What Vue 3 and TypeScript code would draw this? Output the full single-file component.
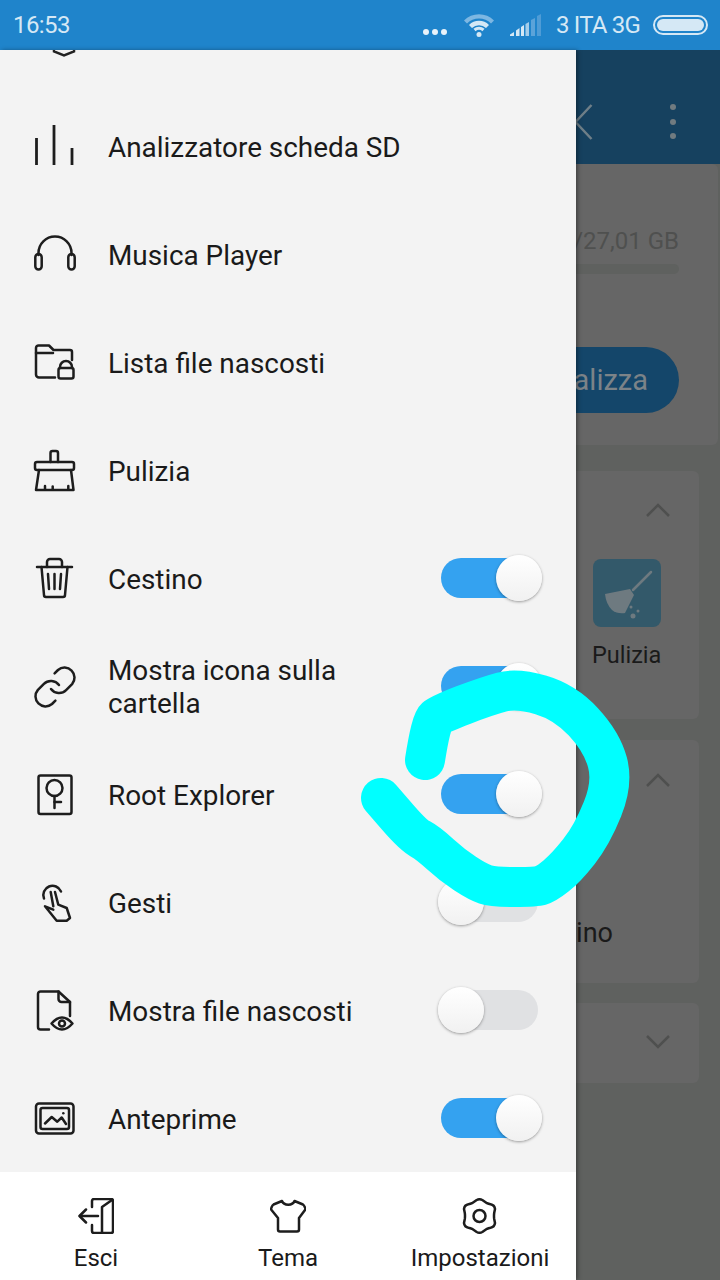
<script setup lang="ts">
interface Row {
  label: string
  icon: string[]
  toggle?: 'on' | 'off'
  thin?: boolean
}

const rows: Row[] = [
  { label: 'Analizzatore scheda SD', thin: true, icon: ['M5.5 15V42', 'M23 2V42', 'M41 25V42'] },
  {
    label: 'Musica Player',
    icon: [
      'M7.5 24V22a16.5 16.5 0 0 1 33 0V24',
      'M7.5 23a3.2 3.2 0 0 1 3.2 3.200V35.300a3.200 3.200 0 0 1-6.400 0V26.200a3.200 3.200 0 0 1 3.200-3.200Z',
      'M40.5 23a3.200 3.200 0 0 1 3.200 3.200V35.300a3.200 3.200 0 0 1-6.400 0V26.200a3.200 3.200 0 0 1 3.200-3.200Z'
    ]
  },
  {
    label: 'Lista file nascosti',
    icon: [
      'M24 38.5H8a3 3 0 0 1-3-3V9a2.5 2.5 0 0 1 2.5-2.5H18l4.5 4.5H39a2 2 0 0 1 2 2V21',
      'M5 14H22',
      'M29.5 29H40.5a2 2 0 0 1 2 2V37.5a2 2 0 0 1-2 2H29.5a2 2 0 0 1-2-2V31a2 2 0 0 1 2-2Z',
      'M29 29V28a6 6 0 0 1 12 0V29'
    ]
  },
  {
    label: 'Pulizia',
    icon: [
      'M19.5 15V6a2 2 0 0 1 2-2H25a2 2 0 0 1 2 2V15',
      'M6 15H41a2 2 0 0 1 2 2V21a2 2 0 0 1-2 2H6a2 2 0 0 1-2-2V17a2 2 0 0 1 2-2Z',
      'M8 23L5 43H42.5L40 23',
      'M14 42V39',
      'M21.700 42V39.500',
      'M37.300 42V39'
    ]
  },
  {
    label: 'Cestino',
    toggle: 'on',
    icon: [
      'M6 12H41',
      'M16 12V7a3 3 0 0 1 3-3H28a3 3 0 0 1 3 3V12',
      'M10.5 12L13 40a2 2 0 0 0 2 2H32a2 2 0 0 0 2-2L36.5 12',
      'M17 19L18 34',
      'M23.5 19V34',
      'M30 19L29 34'
    ]
  },
  {
    label: 'Mostra icona sulla cartella',
    toggle: 'on',
    icon: [
      'M20 26a10 10 0 0 0 15.1 1.1l6-6a10 10 0 0 0-14.1-14.1l-3.4 3.4',
      'M28 22a10 10 0 0 0-15.1-1.1l-6 6a10 10 0 0 0 14.1 14.1l3.4-3.4'
    ]
  },
  {
    label: 'Root Explorer',
    toggle: 'on',
    icon: [
      'M9.5 4.5H38.5a2 2 0 0 1 2 2V41a2 2 0 0 1-2 2H9.5a2 2 0 0 1-2-2V6.5a2 2 0 0 1 2-2Z',
      'M23.5 9a8 8 0 1 1 0 16a8 8 0 1 1 0-16Z',
      'M23.5 25V37',
      'M23.5 31H30'
    ]
  },
  {
    label: 'Gesti',
    toggle: 'off',
    icon: [
      'M13 19.500a9 9 0 1 1 17-7',
      'M19.700 13L22.300 27.300',
      'M24 13L27.300 25.700L35.700 29L39 39L35.700 41.700H25.700L14 27.300L22.300 30.700'
    ]
  },
  {
    label: 'Mostra file nascosti',
    toggle: 'off',
    icon: [
      'M18 42.500H9.500a2.500 2.500 0 0 1-2.500-2.500V7a2.500 2.500 0 0 1 2.500-2.500H27.500L39 15V29',
      'M27.500 4.500V12a3 3 0 0 0 3 3H39',
      'M20.500 36.500Q31 24.500 41.500 36.500Q31 48.500 20.500 36.500Z',
      'M31 33.500a3 3 0 1 1 0 6a3 3 0 1 1 0-6Z'
    ]
  },
  {
    label: 'Anteprime',
    toggle: 'on',
    icon: [
      'M8 8.500H39.500a3 3 0 0 1 3 3V35.500a3 3 0 0 1-3 3H8a3 3 0 0 1-3-3V11.500a3 3 0 0 1 3-3Z',
      'M11.500 13H36a2 2 0 0 1 2 2V32a2 2 0 0 1-2 2H11.500a2 2 0 0 1-2-2V15a2 2 0 0 1 2-2Z',
      'M14 28.500L20.700 22L26.300 26.700L30.700 22.500L35 29',
      'M32.300 18.300h.01'
    ]
  }
]

const navs = [
  {
    label: 'Esci',
    icon: [
      'M14 9V3a2 2 0 0 1 2-2H33a2 2 0 0 1 2 2V33a2 2 0 0 1-2 2H16a2 2 0 0 1-2-2V27',
      'M24 35V9L34 2',
      'M20 18H2',
      'M8 11.500L1.500 18L8 24.500'
    ]
  },
  {
    label: 'Tema',
    icon: [
      'M12 3a6.500 5 0 0 0 12.500 0L33 6.500Q34 7 35 9.500Q35.800 11 35 12L29 20V31.500a2 2 0 0 1-2 2H10a2 2 0 0 1-2-2V20L1.500 12Q.7 11 1.500 9.500Q2.500 7 3.500 6.500Z'
    ]
  },
  {
    label: 'Impostazioni',
    icon: [
      'M14.700 2Q17.500 .5 20.300 2L25 5.200Q26.500 6 28.500 6.300Q32.500 7 33 11L32.200 15Q31.800 18 32.200 21L33 25Q32.500 29 28.500 29.700Q26.500 30 25 30.800L20.300 34Q17.500 35.500 14.700 34L10 30.800Q8.500 30 6.500 29.700Q2.500 29 2 25L2.800 21Q3.200 18 2.800 15L2 11Q2.500 7 6.500 6.300Q8.500 6 10 5.200Z',
      'M17.500 12a6 6 0 1 1 0 12a6 6 0 1 1 0-12Z'
    ]
  }
]

// The hand-drawn ring: a smooth curve through the sampled stroke points.
const ring: [number, number][] = [
  [425, 760], [431, 722], [440, 714], [487, 696], [517, 688], [565, 702], [602, 742],
  [613, 783], [592, 835], [566, 868], [546, 884], [535, 887], [493, 887], [478, 882],
  [452, 865], [428, 843], [413, 835], [381, 798]
]

const ringPath = ring.reduce((d, [x, y], i) => {
  if (i === 0) return `M${x} ${y}`
  if (i === ring.length - 1) return `${d}L${x} ${y}`
  const [nx, ny] = ring[i + 1]
  return `${d}Q${x} ${y} ${(x + nx) / 2} ${(y + ny) / 2}`
}, '')
</script>

<template>
  <div class="screen">
    <header class="status">
      <span class="clock">16:53</span>
      <div class="status-right">
        <span class="dots"><i></i><i></i><i></i></span>
        <svg class="wifi" width="32" height="26" viewBox="0 0 32 26">
          <path d="M1 9.500a21 21 0 0 1 30 0L28 12.500a17 17 0 0 0-24 0Z" fill="#7db7e2" />
          <path d="M6 14a14 14 0 0 1 20 0L23 17a10 10 0 0 0-14 0Z" fill="#d5e8f5" />
          <path d="M11.500 19a7 7 0 0 1 9 0" fill="none" stroke="#d5e8f5" stroke-width="3.200" />
          <circle cx="16" cy="23.500" r="2.500" fill="#d5e8f5" />
        </svg>
        <svg class="signal" width="32" height="22" viewBox="0 0 32 22">
          <path d="M0 22V20.500L4 18V22Z" fill="#d5e8f5" />
          <path d="M6 22V16.500L9.500 14V22Z" fill="#d5e8f5" />
          <path d="M11 22V13L14 11V22Z" fill="#d5e8f5" />
          <path d="M15.500 22V10L19 8V22Z" fill="#a5cdea" />
          <path d="M21 22V6L25 4V22Z" fill="#5ba3d9" />
          <path d="M27 22V2L31 0V22Z" fill="#4f9cd6" />
        </svg>
        <span class="carrier">3 ITA 3G</span>
        <span class="battery"><i></i></span>
      </div>
    </header>

    <div class="stage">
      <aside class="drawer">
        <div class="list">
          <div class="cut-row">
            <svg width="48" height="7" viewBox="0 0 48 7">
              <path class="stroke" d="M14 0V1.500L24 5.500L34 1.500V0" />
            </svg>
          </div>
          <div v-for="row in rows" :key="row.label" class="row">
            <svg class="icon" :class="{ thin: row.thin }" width="48" height="48" viewBox="0 0 48 48">
              <path v-for="d in row.icon" :key="d" :d="d" />
            </svg>
            <span class="label">{{ row.label }}</span>
            <span v-if="row.toggle" class="toggle" :class="row.toggle"><i></i></span>
          </div>
        </div>
        <nav class="nav">
          <div v-for="nav in navs" :key="nav.label" class="nav-item">
            <svg class="icon nav-icon" width="36" height="36" viewBox="0 0 36 36">
              <path v-for="d in nav.icon" :key="d" :d="d" />
            </svg>
            <span>{{ nav.label }}</span>
          </div>
        </nav>
      </aside>

      <main class="page">
        <div class="topbar">
          <svg width="20" height="36" viewBox="0 0 20 36">
            <path d="M17.500 1L1.500 18L17.500 35" fill="none" stroke="#6f7f88" stroke-width="2.500" />
          </svg>
          <span class="more"><i></i><i></i><i></i></span>
        </div>

        <section class="card storage">
          <div class="size">/27,01 GB</div>
          <div class="bar"></div>
          <div class="action">Analizza</div>
        </section>

        <section class="card tools">
          <svg class="chev" width="26" height="16" viewBox="0 0 26 16">
            <path d="M2 14L13 3L24 14" />
          </svg>
          <div class="tile">
            <svg width="68" height="68" viewBox="0 0 68 68">
              <path d="M58 13L40 31" fill="none" stroke="#6e7a80" stroke-width="2.500" stroke-linecap="round" />
              <path d="M12 35L37 30L41 36L32 54Q24 55 19 51Q13 45 12 35Z" fill="#6e7a80" />
              <circle cx="40" cy="57" r="2.500" fill="#6e7a80" />
              <circle cx="38" cy="48" r="1.500" fill="#6e7a80" />
              <circle cx="45" cy="52" r="1.500" fill="#6e7a80" />
            </svg>
          </div>
          <div class="tile-label">Pulizia</div>
        </section>

        <section class="card media">
          <svg class="chev" width="26" height="16" viewBox="0 0 26 16">
            <path d="M2 14L13 3L24 14" />
          </svg>
          <div class="media-label">Cestino</div>
        </section>

        <section class="card closed">
          <svg class="chev" width="26" height="16" viewBox="0 0 26 16">
            <path d="M2 2L13 13L24 2" />
          </svg>
        </section>
      </main>
    </div>

    <svg class="scribble" width="720" height="1280" viewBox="0 0 720 1280">
      <path :d="ringPath" />
    </svg>
  </div>
</template>

<style>
html,
body {
  margin: 0;
  background: #5f615f;
}
</style>

<style scoped>
.screen {
  width: 720px;
  height: 1280px;
  overflow: hidden;
  position: relative;
  display: flex;
  flex-direction: column;
  font-family: Roboto, "Liberation Sans", sans-serif;
}

.status {
  height: 50px;
  flex: none;
  background: #1f84cb;
  color: #d5e8f5;
  display: flex;
  align-items: center;
  justify-content: space-between;
  padding: 0 12px 0 13px;
  font-size: 24px;
  font-weight: 400;
}

.clock {
  letter-spacing: -0.6px;
}

.status-right {
  display: flex;
  align-items: center;
}

.dots {
  display: flex;
  gap: 3px;
  margin-top: 14px;
  margin-right: 16px;
}

.dots i {
  width: 6px;
  height: 6px;
  border-radius: 50%;
  background: #e8f2fa;
}

.wifi {
  margin-right: 15px;
  margin-top: -2px;
}

.signal {
  margin-right: 14px;
}

.carrier {
  margin-right: 13px;
  letter-spacing: -0.8px;
}

.battery {
  width: 55px;
  height: 20px;
  box-sizing: border-box;
  border: 2px solid #d5e8f5;
  border-radius: 10px;
  padding: 2px;
  display: flex;
}

.battery i {
  flex: 1;
  border-radius: 6px;
  background: #d5e8f5;
}

.stage {
  flex: 1;
  min-height: 0;
  display: flex;
}

.drawer {
  width: 576px;
  flex: none;
  display: flex;
  flex-direction: column;
  background: #f3f3f3;
  box-shadow: 2px 0 4px rgba(0, 0, 0, 0.35);
  position: relative;
  z-index: 1;
}

.list {
  flex: 1;
  min-height: 0;
  overflow: hidden;
}

.cut-row {
  height: 43px;
  padding-left: 40px;
  box-sizing: border-box;
}

.cut-row svg {
  display: block;
}

.stroke {
  fill: none;
  stroke: #222;
  stroke-width: 2.500px;
}

.row {
  height: 108px;
  display: flex;
  align-items: center;
  padding: 0 38px 0 31px;
  box-sizing: border-box;
}

.icon {
  flex: none;
  fill: none;
  stroke: #1d1d1d;
  stroke-width: 2.500px;
  stroke-linecap: round;
  stroke-linejoin: round;
}

.icon.thin {
  stroke-linecap: butt;
  stroke-width: 2.800px;
}

.label {
  margin-left: 29px;
  flex: 1;
  max-width: 300px;
  font-size: 27.9px;
  line-height: 33px;
  color: #1a1a1a;
}

.toggle {
  margin-left: auto;
  width: 97px;
  height: 40px;
  border-radius: 20px;
  position: relative;
  margin-top: -2px;
}

.toggle.on {
  background: #34a2f0;
}

.toggle.off {
  background: #e0e1e3;
}

.toggle i {
  position: absolute;
  top: -3px;
  width: 46px;
  height: 46px;
  border-radius: 50%;
  background: linear-gradient(#ffffff, #f1f1f1);
  box-shadow: 0 1px 3px rgba(0, 0, 0, 0.38);
}

.toggle.on i {
  right: -4px;
}

.toggle.off i {
  left: -3px;
}

.nav {
  height: 108px;
  flex: none;
  background: #fff;
  display: grid;
  grid-template-columns: repeat(3, 1fr);
}

.nav-item {
  display: flex;
  flex-direction: column;
  align-items: center;
  padding-top: 26px;
  font-size: 24px;
  line-height: 28px;
  color: #1a1a1a;
}

.nav-icon {
  margin-bottom: 10px;
}

.page {
  flex: 1;
  min-width: 0;
  overflow: hidden;
  background: #5f615f;
  display: flex;
  flex-direction: column;
}

.topbar {
  height: 114px;
  flex: none;
  background: #16415f;
  display: flex;
  align-items: flex-start;
  justify-content: space-between;
  padding: 54px 44px 0 0;
  box-sizing: border-box;
}

.topbar svg {
  margin-left: -2px;
}

.more {
  display: flex;
  flex-direction: column;
  gap: 8.500px;
}

.more i {
  width: 6px;
  height: 6px;
  border-radius: 50%;
  background: #717b80;
}

.card {
  background: #666666;
  border-radius: 0 6px 6px 0;
  display: flex;
  flex-direction: column;
  flex: none;
  box-sizing: border-box;
  margin-right: 21px;
}

.storage {
  height: 281px;
  margin-right: 2px;
  align-items: flex-end;
  padding: 62px 39px 0 0;
  white-space: nowrap;
}

.size {
  font-size: 24px;
  line-height: 30px;
  color: #4f504f;
}

.bar {
  width: 150px;
  height: 10px;
  border-radius: 5px;
  background: #5f615f;
  margin-top: 8px;
}

.action {
  width: 240px;
  height: 66px;
  flex: none;
  border-radius: 33px;
  background: #14466a;
  color: #7c8388;
  font-size: 29px;
  line-height: 66px;
  text-align: right;
  padding-right: 31px;
  box-sizing: border-box;
  margin-top: 73px;
}

.tools {
  height: 248px;
  margin-top: 26px;
  padding-top: 31px;
}

.media {
  height: 243px;
  margin-top: 21px;
  padding-top: 32px;
}

.closed {
  height: 80px;
  margin-top: 20px;
  padding-top: 31px;
}

.chev {
  align-self: flex-end;
  margin-right: 28px;
  fill: none;
  stroke: #4f504f;
  stroke-width: 2.500px;
  flex: none;
}

.tile {
  width: 68px;
  height: 68px;
  border-radius: 8px;
  background: #33596a;
  margin: 41px 0 0 17px;
}

.tile-label {
  margin: 13px 0 0 16px;
  font-size: 23.500px;
  line-height: 30px;
  color: #1a1a1a;
}

.media-label {
  align-self: flex-end;
  margin: 129px 86px 0 0;
  font-size: 27px;
  line-height: 32px;
  color: #1a1a1a;
  white-space: nowrap;
}

.scribble {
  position: absolute;
  left: 0;
  top: 0;
  z-index: 2;
  pointer-events: none;
  fill: none;
  stroke: #00ffff;
  stroke-width: 40px;
  stroke-linecap: round;
  stroke-linejoin: round;
}
</style>
